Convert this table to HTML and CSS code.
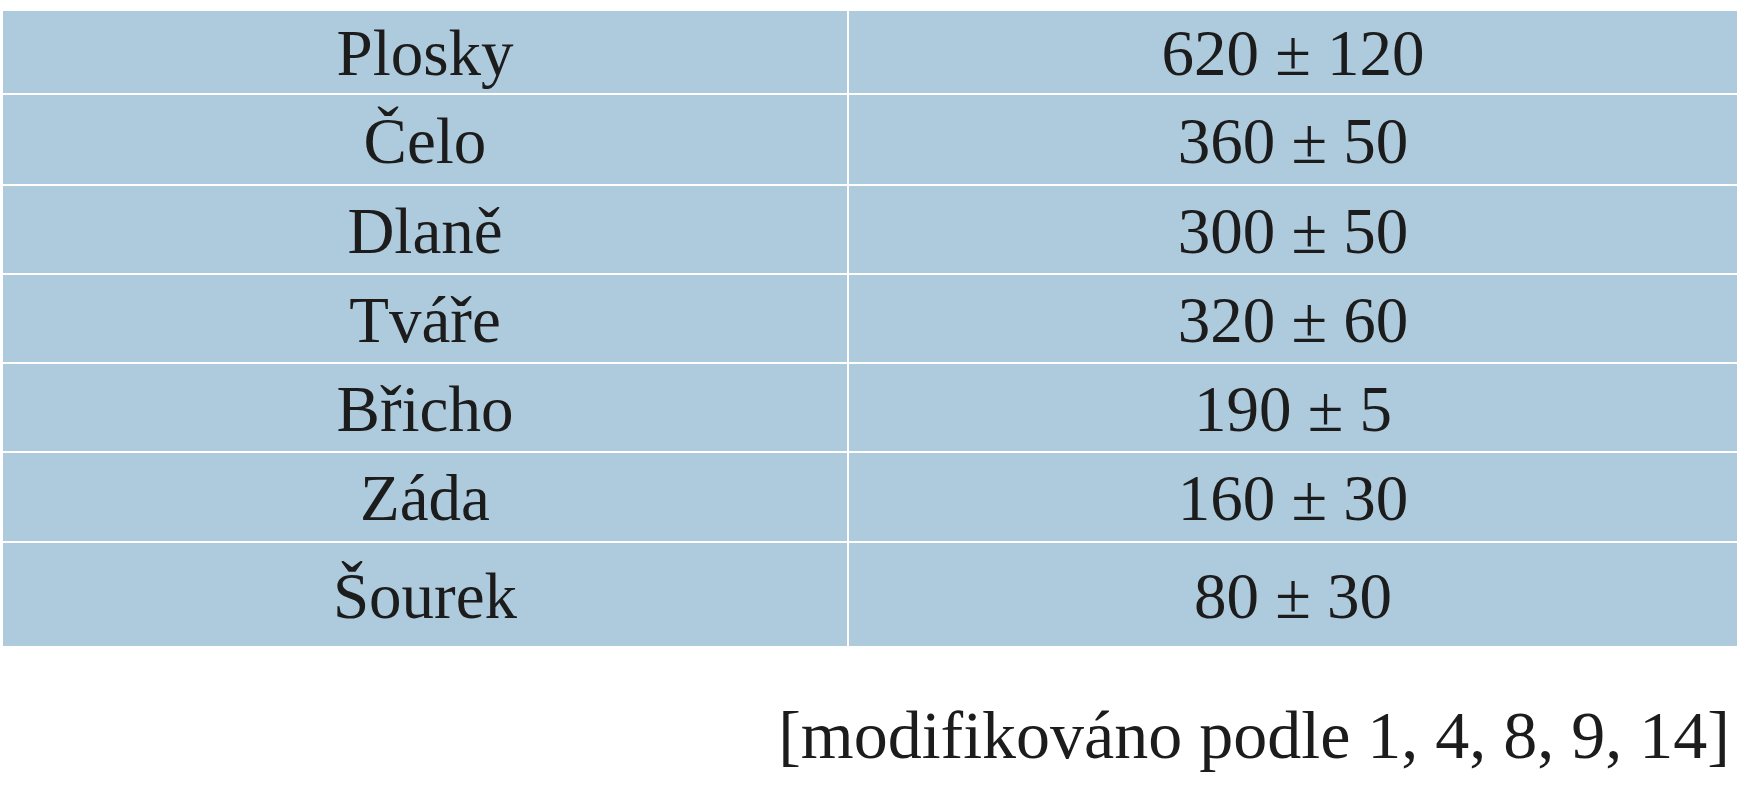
FILE: index.html
```html
<!DOCTYPE html>
<html lang="cs">
<head>
<meta charset="utf-8">
<link rel="stylesheet" href="styles.css">
</head>
<body>
<div class="page">
  <div class="table">
    <div class="cell">Plosky</div><div class="cell">620 ± 120</div>
    <div class="cell">Čelo</div><div class="cell">360 ± 50</div>
    <div class="cell">Dlaně</div><div class="cell">300 ± 50</div>
    <div class="cell">Tváře</div><div class="cell">320 ± 60</div>
    <div class="cell">Břicho</div><div class="cell">190 ± 5</div>
    <div class="cell">Záda</div><div class="cell">160 ± 30</div>
    <div class="cell">Šourek</div><div class="cell">80 ± 30</div>
  </div>
  <div class="caption">[modifikováno podle 1, 4, 8, 9, 14]</div>
</div>
</body>
</html>
```

FILE: styles.css
```css
html, body {
  margin: 0;
  padding: 0;
  background: #ffffff;
}
.page {
  width: 1757px;
  height: 800px;
  padding-top: 11px;
  box-sizing: border-box;
  font-family: "Liberation Serif", "Times New Roman", serif;
  color: #1c1c1c;
}
.table {
  margin-left: 3px;
  width: 1734px;
  display: grid;
  grid-template-columns: 844px 888px;
  grid-template-rows: 82px 89px 87px 87px 87px 88px 103px;
  gap: 2px;
}
.cell {
  background: #aecbdd;
  display: flex;
  align-items: center;
  justify-content: center;
  font-size: 65px;
  line-height: 1;
  padding-top: 3px;
  box-sizing: border-box;
}
.caption {
  margin-top: 55px;
  padding-right: 27px;
  text-align: right;
  font-size: 68px;
  line-height: 1;
}
```
